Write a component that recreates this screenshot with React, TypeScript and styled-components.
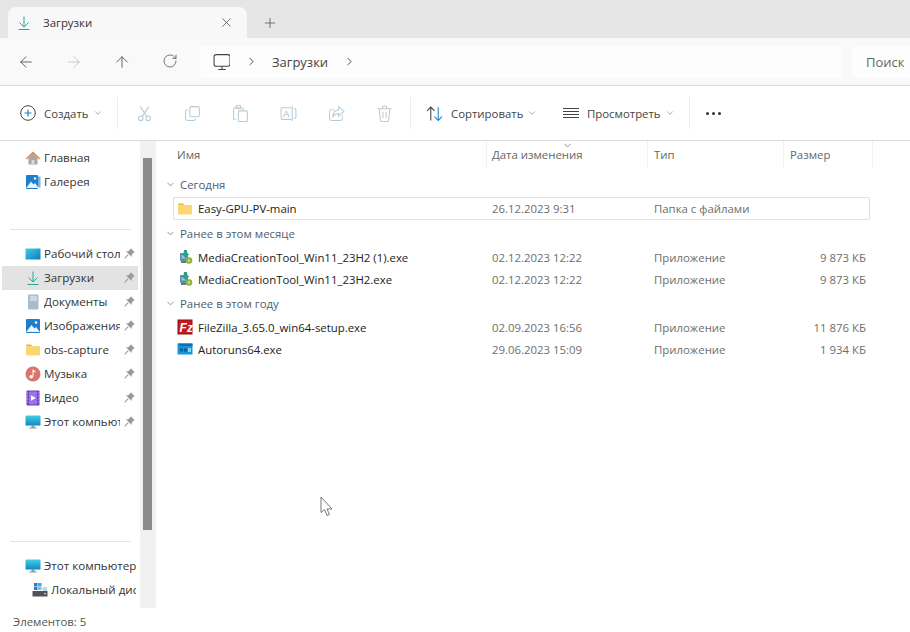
import { ReactNode } from 'react';
import styled, { createGlobalStyle } from 'styled-components';
import { ArrowLeft, ArrowRight, ArrowUp, ChevronDown, ChevronRight, Plus, RotateCw, X } from 'lucide-react';

const GlobalStyle = createGlobalStyle`
  html, body { margin: 0; padding: 0; background: #fff; }
  body { font-family: "Open Sans", "Liberation Sans", sans-serif; font-size: 11.4px; color: #222; }
  * { box-sizing: border-box; }
`;

const Win = styled.div`
  position: relative;
  width: 910px;
  height: 632px;
  overflow: hidden;
  display: flex;
  flex-direction: column;
  background: #fff;
`;

const TabBar = styled.div`
  height: 38px;
  flex: none;
  display: flex;
  align-items: flex-end;
  padding-left: 8px;
  background: #e6e6e6;
`;

const Tab = styled.div`
  width: 239px;
  height: 31px;
  display: flex;
  align-items: center;
  padding: 0 13px 0 8px;
  gap: 11px;
  background: #f8f8f8;
  border-radius: 8px 8px 0 0;
  color: #333;
`;

const TabTitle = styled.span`
  flex: 1;
`;

const NewTab = styled.div`
  display: flex;
  align-items: center;
  height: 31px;
  margin-left: 15px;
  color: #555;
`;

const NavBar = styled.div`
  height: 48px;
  flex: none;
  display: flex;
  align-items: center;
  background: #f9f9f9;
  border-bottom: 1px solid #dadada;
`;

const NavButton = styled.div<{ $off?: boolean }>`
  width: 48px;
  display: flex;
  justify-content: center;
  color: ${p => (p.$off ? '#c4c4c4' : '#555')};
`;

const NavButtons = styled.div`
  display: flex;
  margin-left: 2px;
  margin-right: 6px;
`;

const Address = styled.div`
  width: 642px;
  height: 32px;
  display: flex;
  align-items: center;
  padding-left: 13px;
  background: #fdfdfd;
  border-radius: 4px;
  color: #444;
  font-size: 13px;
`;

const Crumb = styled.span`
  display: flex;
  margin: 0 14px 0 15px;
  color: #333;
`;

const Search = styled.div`
  flex: 1;
  height: 32px;
  margin-left: 10px;
  padding-left: 14px;
  display: flex;
  align-items: center;
  background: #fdfdfd;
  border-radius: 4px 0 0 4px;
  color: #666;
  font-size: 13px;
  white-space: nowrap;
`;

const Toolbar = styled.div`
  height: 55px;
  flex: none;
  display: flex;
  align-items: center;
  padding-left: 20px;
  background: #fff;
  border-bottom: 1px solid #dadada;
`;

const ToolLabel = styled.div<{ $w: number }>`
  display: flex;
  align-items: center;
  gap: 8px;
  width: ${p => p.$w}px;
  flex: none;
  color: #444;
  white-space: nowrap;
`;

const Caret = styled(ChevronDown)`
  margin-left: -4px;
  color: #999;
`;

const Sep = styled.div<{ $before?: number; $after: number }>`
  width: 1px;
  height: 32px;
  flex: none;
  margin: 0 ${p => p.$after}px 0 ${p => p.$before ?? 0}px;
  background: #ececec;
`;

const ToolIcon = styled.div`
  width: 48px;
  flex: none;
  display: flex;
  justify-content: center;
`;

const Dots = styled.div`
  display: flex;
  gap: 3px;
`;

const Dot = styled.i`
  width: 3px;
  height: 3px;
  border-radius: 50%;
  background: #333;
`;

const Content = styled.div`
  flex: 1;
  min-height: 0;
  display: flex;
`;

const LeftPane = styled.div`
  width: 156px;
  flex: none;
  display: flex;
  flex-direction: column;
`;

const LeftBody = styled.div`
  height: 467px;
  display: flex;
`;

const Sidebar = styled.div`
  width: 140px;
  height: 467px;
  flex: none;
  overflow: hidden;
  padding-top: 5px;
  font-size: 11.6px;
`;

const SideRow = styled.div<{ $sel?: boolean; $indent?: number }>`
  height: 24px;
  margin: 0 2px;
  padding: 0 2px 1px ${p => p.$indent ?? 23}px;
  display: flex;
  align-items: center;
  gap: 3px;
  white-space: nowrap;
  color: #333;
  background: ${p => (p.$sel ? '#e3e3e3' : 'transparent')};
`;

const SideLabel = styled.span`
  flex: 1;
  min-width: 0;
  overflow: hidden;
`;

const Divider = styled.div<{ $top: number }>`
  height: 1px;
  margin: ${p => p.$top}px 9px 12px 10px;
  background: #e4e4e4;
`;

const Track = styled.div`
  width: 16px;
  flex: none;
  padding: 17px 4px 0 3px;
  background: #f1f1f1;
`;

const Thumb = styled.div`
  height: 372px;
  background: #8b8b8b;
`;

const Status = styled.div`
  flex: 1;
  display: flex;
  align-items: center;
  padding: 3px 0 0 13px;
  color: #555;
  white-space: nowrap;
`;

const Main = styled.div`
  flex: 1;
  min-width: 0;
  padding-left: 9px;
`;

const Header = styled.div`
  position: relative;
  display: grid;
  grid-template-columns: 314px 161px 136px 89px;
  height: 27px;
  width: 700px;
  margin-left: 8px;
`;

const HeadCell = styled.div<{ $pad: number }>`
  display: flex;
  align-items: center;
  padding-left: ${p => p.$pad}px;
  border-right: 1px solid #f0f0f0;
  color: #666;
`;

const SortMark = styled(ChevronDown)`
  position: absolute;
  left: 389px;
  top: -1px;
  color: #888;
`;

const List = styled.div`
  padding-top: 3px;
`;

const Group = styled.div`
  height: 22px;
  margin: 2px 0;
  display: flex;
  align-items: center;
  gap: 4px;
  color: #4e5d73;
`;

const GroupCaret = styled(ChevronDown)`
  color: #8a8a8a;
  flex: none;
`;

const Row = styled.div<{ $focus?: boolean }>`
  display: grid;
  grid-template-columns: 318px 162px 136px 76px;
  align-items: center;
  width: 697px;
  height: ${p => (p.$focus ? 23 : 22)}px;
  margin-left: 8px;
  border: 1px solid ${p => (p.$focus ? '#d3e9e6' : 'transparent')};
  border-right-color: ${p => (p.$focus ? '#d8dfdf' : 'transparent')};
  border-radius: 2px;
`;

const NameCell = styled.div`
  display: flex;
  align-items: center;
  gap: 5px;
  padding-left: 3px;
  color: #222;
  white-space: nowrap;
`;

const Meta = styled.div<{ $right?: boolean }>`
  color: #6e6e6e;
  white-space: nowrap;
  text-align: ${p => (p.$right ? 'right' : 'left')};
`;

const Pointer = styled.svg`
  position: absolute;
  left: 320px;
  top: 496px;
`;

const Glyph = ({ children, size = 16, box = 16, color }: { children: ReactNode; size?: number; box?: number; color?: string }) => (
  <svg width={size} height={size} viewBox={`0 0 ${box} ${box}`} fill="none" stroke={color} strokeWidth={1} style={{ flex: 'none' }}>
    {children}
  </svg>
);

const DownloadIcon = ({ size = 16 }: { size?: number }) => (
  <Glyph size={size} color="#2aa89a">
    <path d="M8 1.5v10M3.5 7.5 8 12l4.5-4.5M2.5 14.5h11" />
  </Glyph>
);

const Pin = () => (
  <Glyph size={13} color="none">
    <path d="M9.5 1.5 14.5 6.5 12.8 7.2 10.8 9.6 10.6 12.2 3.8 5.4 6.4 5.2 8.8 3.2Z" fill="#9a9a9a" />
    <path d="M6.5 9.5 2 14" stroke="#9a9a9a" strokeWidth={1.3} />
  </Glyph>
);

const FolderIcon = () => (
  <Glyph color="none">
    <path d="M1 3.5a1 1 0 0 1 1-1h4l1.5 1.5H1Z" fill="#e8b93f" />
    <rect x="1" y="4" width="14" height="9.5" rx="1" fill="#fbd774" />
  </Glyph>
);

const sideIcons: Record<string, ReactNode> = {
  home: (
    <Glyph color="none">
      <path d="M3.5 8v6.5h9V8L8 3.5Z" fill="#a8a8a8" />
      <rect x="6.5" y="10" width="3" height="4.5" fill="#d8d8d8" />
      <path d="M.8 8.4 8 1.5l7.2 6.9-1 1.1L8 3.7 1.8 9.5Z" fill="#e0864c" />
    </Glyph>
  ),
  gallery: (
    <Glyph color="none">
      <rect x="12" y="2.5" width="3.5" height="11" fill="#77b4e0" />
      <rect x="1" y="1" width="12" height="14" rx="1" fill="#1a7fcf" />
      <path d="M1.5 13.5 6 7.5l2.5 3 1.5-1.5 3 4v1H1.5Z" fill="#e8f3fb" />
      <circle cx="10" cy="4.5" r="1.2" fill="#fff" />
    </Glyph>
  ),
  desktop: (
    <svg width="16" height="16" viewBox="0 0 16 16" style={{ flex: 'none' }}>
      <defs>
        <linearGradient id="deskFill" x1="0" y1="0" x2="1" y2="1">
          <stop offset="0" stopColor="#3fd0e8" />
          <stop offset="1" stopColor="#0f78b8" />
        </linearGradient>
      </defs>
      <rect x="0.5" y="2.5" width="15" height="11" rx="0.5" fill="url(#deskFill)" />
    </svg>
  ),
  docs: (
    <Glyph color="none">
      <rect x="3" y="0.5" width="10.5" height="15" rx="1" fill="#a9bccb" />
      <rect x="5" y="2" width="7" height="5" fill="#cbd8e2" />
    </Glyph>
  ),
  pictures: (
    <Glyph color="none">
      <rect x="1" y="1" width="14" height="14" rx="1" fill="#1a7fcf" />
      <path d="M1.5 13.5 6.5 7l3 3.5 1.5-1.5 3.5 4.5v.5H1.5Z" fill="#eef6fc" />
      <circle cx="11" cy="4.5" r="1.3" fill="#fff" />
    </Glyph>
  ),
  folder: <FolderIcon />,
  music: (
    <Glyph color="none">
      <circle cx="8" cy="8" r="7.5" fill="#d9756d" />
      <path d="M7.5 3.5h1v7H7.5ZM8.5 3.5c.5 1.5 2.5 1.5 2.5 3.5-.8-1-1.6-1.2-2.5-1.2Z" fill="#fff" />
      <circle cx="6.2" cy="10.8" r="1.8" fill="#fff" />
    </Glyph>
  ),
  video: (
    <Glyph color="none">
      <rect x="1.5" y="0.5" width="13" height="15" rx="1" fill="#6a3fc4" />
      <rect x="4" y="1.5" width="8" height="13" fill="#9a74e6" />
      <path d="M6 5.2 10.8 8 6 10.8Z" fill="#fff" />
      <path d="M2.2 3h1M2.2 6h1M2.2 9h1M2.2 12h1M12.8 3h1M12.8 6h1M12.8 9h1M12.8 12h1" stroke="#d9cdf5" />
    </Glyph>
  ),
  pc: (
    <svg width="16" height="16" viewBox="0 0 16 16" style={{ flex: 'none' }}>
      <defs>
        <linearGradient id="pcFill" x1="0" y1="0" x2="0" y2="1">
          <stop offset="0" stopColor="#45cfe6" />
          <stop offset="1" stopColor="#1186c4" />
        </linearGradient>
      </defs>
      <rect x="0.5" y="1.5" width="15" height="10" rx="0.5" fill="url(#pcFill)" />
      <rect x="6.5" y="11.5" width="3" height="2" fill="#7d8b95" />
      <rect x="4.5" y="13.5" width="7" height="1" fill="#7d8b95" />
    </svg>
  ),
  disk: (
    <Glyph color="none">
      <rect x="2" y="1" width="3.5" height="3.5" fill="#2a7fc9" />
      <rect x="6" y="1" width="3.5" height="3.5" fill="#4aa3e0" />
      <rect x="2" y="5" width="3.5" height="3" fill="#2a7fc9" />
      <rect x="6" y="5" width="3.5" height="3" fill="#7cc0ea" />
      <rect x="10.5" y="5" width="4.5" height="4" fill="#bcd9ec" />
      <rect x="0.5" y="9" width="15" height="5.5" rx="0.5" fill="#4f5357" />
      <rect x="12" y="11" width="2" height="1.2" fill="#b8e0c0" />
    </Glyph>
  ),
  drive: (
    <Glyph color="none">
      <rect x="3" y="4" width="10" height="3" fill="#55595d" />
      <rect x="1" y="7" width="12" height="6" fill="#55595d" />
    </Glyph>
  ),
};

const MctIcon = () => (
  <Glyph color="none">
    <rect x="3" y="4" width="8" height="8" rx="1" fill="#5d8ea8" />
    <rect x="4.500" y="6" width="4.500" height="3.500" fill="#9cc4d8" />
    <path d="M7 1 10 1 10.500 5 12.500 5 8.500 9 4.500 5 6.500 5Z" fill="#2f9e8f" />
    <circle cx="12" cy="11.500" r="3.300" fill="#8eb23e" />
    <circle cx="12" cy="11.500" r="1.200" fill="#d9df6a" />
    <rect x="4" y="12" width="5" height="2" fill="#667a88" />
  </Glyph>
);

const FzBadge = styled.text`
  font-family: "Liberation Sans", sans-serif;
  font-weight: 700;
  font-size: 12px;
  font-style: italic;
`;

const FileZillaIcon = () => (
  <svg width="16" height="16" viewBox="0 0 16 16" style={{ flex: 'none' }}>
    <rect x="0.5" y="0.5" width="15" height="15" fill="#8f1010" />
    <rect x="1.5" y="1.5" width="13" height="13" fill="#bf1c1c" />
    <FzBadge x="2.6" y="12.5" fill="#fff">Fz</FzBadge>
  </svg>
);

const AutorunsIcon = () => (
  <Glyph color="none">
    <rect x="0.5" y="2.5" width="15" height="11" rx="0.5" fill="#1496dc" />
    <path d="M0.5 2.5h15V5H4Z" fill="#0f6fb4" />
    <rect x="3" y="7.5" width="3" height="3" fill="#0b5d9e" />
    <rect x="7" y="7.5" width="3" height="3" fill="#0b5d9e" />
    <rect x="11" y="7" width="3" height="4" fill="#7fd6f2" />
  </Glyph>
);

const Cut = () => (
  <Glyph size={17} color="#b7ccd9">
    <path d="M4 1.5 10 10.5M12 1.5 6 10.5" stroke="#c2c7cb" />
    <circle cx="4.5" cy="12.5" r="2.2" />
    <circle cx="11.5" cy="12.5" r="2.2" />
  </Glyph>
);

const CopyGlyph = () => (
  <Glyph size={17} color="#b7ccd9">
    <rect x="5.5" y="1.5" width="9" height="9.5" rx="1.5" />
    <path d="M3.5 4.5h-.5a1.5 1.5 0 0 0-1.5 1.5v7A1.5 1.5 0 0 0 3 14.5h6.5a1.5 1.5 0 0 0 1.5-1.5" />
  </Glyph>
);

const Paste = () => (
  <Glyph size={17} color="#c2c9cf">
    <path d="M3.5 13.5H2.5a1 1 0 0 1-1-1v-9a1 1 0 0 1 1-1h7a1 1 0 0 1 1 1v1.5" />
    <rect x="4" y="0.5" width="4" height="3" rx="0.5" />
    <rect x="6" y="5.5" width="8.5" height="10" rx="1" stroke="#b7ccd9" />
  </Glyph>
);

const RenameLetter = styled.text`
  font-family: "Liberation Sans", sans-serif;
  font-size: 9px;
`;

const Rename = () => (
  <Glyph size={17} color="#b7ccd9">
    <path d="M10.5 2.5H2a1 1 0 0 0-1 1v9a1 1 0 0 0 1 1h8.5M13 3.5h1a1 1 0 0 1 1 1v7a1 1 0 0 1-1 1h-1M11.5 1v14" />
    <RenameLetter x="2.8" y="11.5" fill="#aab8c2" stroke="none">A</RenameLetter>
  </Glyph>
);

const Share = () => (
  <Glyph size={17} color="#b7ccd9">
    <path d="M13.5 10v3a1.5 1.5 0 0 1-1.5 1.5H3A1.5 1.5 0 0 1 1.5 13V6A1.5 1.5 0 0 1 3 4.500h2.500" stroke="#c2c9cf" />
    <path d="M10 1.500 15 6l-5 4.500V8c-2.500 0-4 .8-5.500 3 .2-3.500 2-6 5.500-6.500Z" />
  </Glyph>
);

const Trash = () => (
  <Glyph size={17} color="#c2c9cf">
    <path d="M1.500 3.500h13M6 3.500V2a1 1 0 0 1 1-1h2a1 1 0 0 1 1 1v1.500M3 3.500 4 14a1.500 1.500 0 0 0 1.500 1.500h5A1.500 1.500 0 0 0 12 14l1-10.500M6.500 6.500v6M9.500 6.500v6" />
  </Glyph>
);

const CreateIcon = () => (
  <Glyph color="#444">
    <circle cx="8" cy="8" r="7.300" />
    <path d="M8 4.500v7M4.500 8h7" stroke="#1a86c8" strokeWidth={1.200} />
  </Glyph>
);

const SortIcon = () => (
  <Glyph size={17} color="#444">
    <path d="M4.500 14.500V2M1 5.500 4.500 2 8 5.500" />
    <path d="M11.500 2v12.500M8 11l3.500 3.500L15 11" stroke="#1a86c8" />
  </Glyph>
);

const ViewIcon = () => (
  <Glyph color="#444">
    <path d="M0 3.500h16M0 6.500h16M0 9.500h16M0 12.500h16" />
  </Glyph>
);

const MonitorIcon = () => (
  <Glyph size={17} color="#444">
    <rect x="1" y="1.500" width="15" height="11" rx="2" />
    <path d="M8.500 12.500v3M5 15.500h7" />
  </Glyph>
);

const topPlaces = [
  { icon: 'home', label: 'Главная' },
  { icon: 'gallery', label: 'Галерея' },
];

const pinned = [
  { icon: 'desktop', label: 'Рабочий стол' },
  { icon: 'download', label: 'Загрузки', sel: true },
  { icon: 'docs', label: 'Документы' },
  { icon: 'pictures', label: 'Изображения' },
  { icon: 'folder', label: 'obs-capture' },
  { icon: 'music', label: 'Музыка' },
  { icon: 'video', label: 'Видео' },
  { icon: 'pc', label: 'Этот компьютер' },
];

const groups = [
  {
    title: 'Сегодня',
    files: [{ name: 'Easy-GPU-PV-main', icon: <FolderIcon />, date: '26.12.2023 9:31', type: 'Папка с файлами', size: '', focus: true }],
  },
  {
    title: 'Ранее в этом месяце',
    files: [
      { name: 'MediaCreationTool_Win11_23H2 (1).exe', icon: <MctIcon />, date: '02.12.2023 12:22', type: 'Приложение', size: '9 873 КБ' },
      { name: 'MediaCreationTool_Win11_23H2.exe', icon: <MctIcon />, date: '02.12.2023 12:22', type: 'Приложение', size: '9 873 КБ' },
    ],
  },
  {
    title: 'Ранее в этом году',
    files: [
      { name: 'FileZilla_3.65.0_win64-setup.exe', icon: <FileZillaIcon />, date: '02.09.2023 16:56', type: 'Приложение', size: '11 876 КБ' },
      { name: 'Autoruns64.exe', icon: <AutorunsIcon />, date: '29.06.2023 15:09', type: 'Приложение', size: '1 934 КБ' },
    ],
  },
];

export default function App() {
  return (
    <Win>
      <GlobalStyle />
      <TabBar>
        <Tab>
          <DownloadIcon />
          <TabTitle>Загрузки</TabTitle>
          <X size={15} strokeWidth={1.2} color="#444" />
        </Tab>
        <NewTab>
          <Plus size={16} strokeWidth={1.2} />
        </NewTab>
      </TabBar>

      <NavBar>
        <NavButtons>
          <NavButton><ArrowLeft size={18} strokeWidth={1.2} /></NavButton>
          <NavButton $off><ArrowRight size={18} strokeWidth={1.2} /></NavButton>
          <NavButton><ArrowUp size={18} strokeWidth={1.2} /></NavButton>
          <NavButton><RotateCw size={16} strokeWidth={1.2} /></NavButton>
        </NavButtons>
        <Address>
          <MonitorIcon />
          <Crumb><ChevronRight size={13} strokeWidth={1.6} /></Crumb>
          <span>Загрузки</span>
          <Crumb><ChevronRight size={13} strokeWidth={1.6} /></Crumb>
        </Address>
        <Search>Поиск</Search>
      </NavBar>

      <Toolbar>
        <ToolLabel $w={97}>
          <CreateIcon />
          <span>Создать</span>
          <Caret size={10} />
        </ToolLabel>
        <Sep $after={2} />
        <ToolIcon><Cut /></ToolIcon>
        <ToolIcon><CopyGlyph /></ToolIcon>
        <ToolIcon><Paste /></ToolIcon>
        <ToolIcon><Rename /></ToolIcon>
        <ToolIcon><Share /></ToolIcon>
        <ToolIcon><Trash /></ToolIcon>
        <Sep $before={2} $after={15} />
        <ToolLabel $w={137}>
          <SortIcon />
          <span>Сортировать</span>
          <Caret size={10} />
        </ToolLabel>
        <ToolLabel $w={126}>
          <ViewIcon />
          <span>Просмотреть</span>
          <Caret size={10} />
        </ToolLabel>
        <Sep $after={16} />
        <Dots><Dot /><Dot /><Dot /></Dots>
      </Toolbar>

      <Content>
        <LeftPane>
          <LeftBody>
            <Sidebar>
              {topPlaces.map(item => (
                <SideRow key={item.label}>
                  {sideIcons[item.icon]}
                  <SideLabel>{item.label}</SideLabel>
                </SideRow>
              ))}
              <Divider $top={35} />
              {pinned.map(item => (
                <SideRow key={item.label} $sel={item.sel}>
                  {item.icon === 'download' ? <DownloadIcon /> : sideIcons[item.icon]}
                  <SideLabel>{item.label}</SideLabel>
                  <Pin />
                </SideRow>
              ))}
              <Divider $top={107} />
              <SideRow>
                {sideIcons.pc}
                <SideLabel>Этот компьютер</SideLabel>
              </SideRow>
              <SideRow $indent={30}>
                {sideIcons.disk}
                <SideLabel>Локальный диск (C:)</SideLabel>
              </SideRow>
              <SideRow $indent={32}>{sideIcons.drive}</SideRow>
            </Sidebar>
            <Track><Thumb /></Track>
          </LeftBody>
          <Status>Элементов: 5</Status>
        </LeftPane>

        <Main>
          <Header>
            <HeadCell $pad={4}>Имя</HeadCell>
            <HeadCell $pad={5}>Дата изменения</HeadCell>
            <HeadCell $pad={6}>Тип</HeadCell>
            <HeadCell $pad={6}>Размер</HeadCell>
            <SortMark size={11} />
          </Header>
          <List>
            {groups.map(group => (
              <div key={group.title}>
                <Group>
                  <GroupCaret size={11} />
                  {group.title}
                </Group>
                {group.files.map(file => (
                  <Row key={file.name} $focus={file.focus}>
                    <NameCell>
                      {file.icon}
                      {file.name}
                    </NameCell>
                    <Meta>{file.date}</Meta>
                    <Meta>{file.type}</Meta>
                    <Meta $right>{file.size}</Meta>
                  </Row>
                ))}
              </div>
            ))}
          </List>
        </Main>
      </Content>

      <Pointer width="14" height="21" viewBox="0 0 14 21">
        <path d="M1 1v15.500l3.500-3 2.500 6 2.500-1-2.500-5.500h5Z" fill="#fff" stroke="#777" strokeWidth={1} />
      </Pointer>
    </Win>
  );
}
